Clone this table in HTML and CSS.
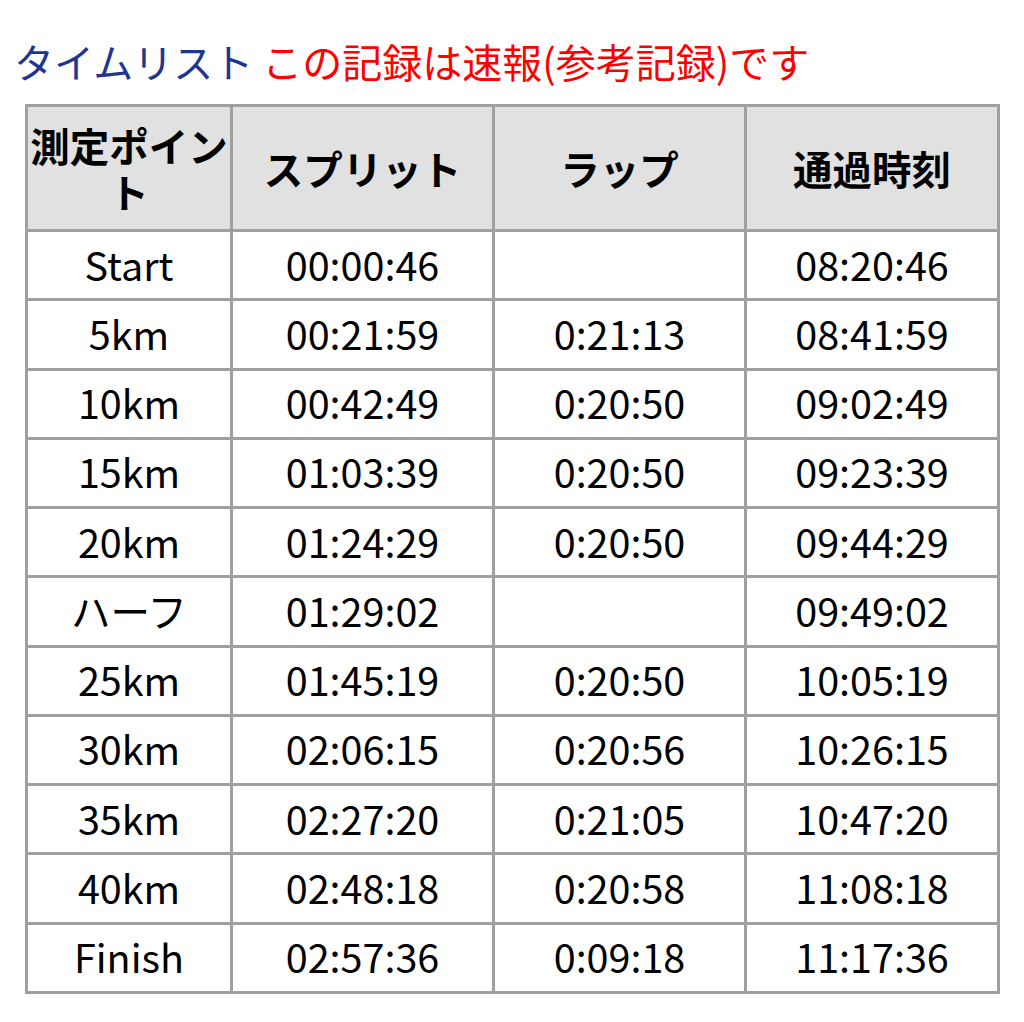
FILE: index.html
```html
<!DOCTYPE html>
<html lang="ja">
<head>
<meta charset="utf-8">
<link rel="stylesheet" href="styles.css">
</head>
<body>
<div class="title"><span class="blue">タイムリスト</span> <span class="red">この記録は速報(参考記録)です</span></div>
<table class="times">
<colgroup><col class="c1"><col class="c2"><col class="c3"><col class="c4"></colgroup>
<thead>
<tr><th>測定ポイント</th><th>スプリット</th><th>ラップ</th><th>通過時刻</th></tr>
</thead>
<tbody>
<tr><td>Start</td><td>00:00:46</td><td></td><td>08:20:46</td></tr>
<tr><td>5km</td><td>00:21:59</td><td>0:21:13</td><td>08:41:59</td></tr>
<tr><td>10km</td><td>00:42:49</td><td>0:20:50</td><td>09:02:49</td></tr>
<tr><td>15km</td><td>01:03:39</td><td>0:20:50</td><td>09:23:39</td></tr>
<tr><td>20km</td><td>01:24:29</td><td>0:20:50</td><td>09:44:29</td></tr>
<tr><td>ハーフ</td><td>01:29:02</td><td></td><td>09:49:02</td></tr>
<tr><td>25km</td><td>01:45:19</td><td>0:20:50</td><td>10:05:19</td></tr>
<tr><td>30km</td><td>02:06:15</td><td>0:20:56</td><td>10:26:15</td></tr>
<tr><td>35km</td><td>02:27:20</td><td>0:21:05</td><td>10:47:20</td></tr>
<tr><td>40km</td><td>02:48:18</td><td>0:20:58</td><td>11:08:18</td></tr>
<tr><td>Finish</td><td>02:57:36</td><td>0:09:18</td><td>11:17:36</td></tr>
</tbody>
</table>
</body>
</html>
```
FILE: styles.css
```css
html, body { margin: 0; padding: 0; background: #fff; }
body {
  font-family: "Noto Sans CJK JP", sans-serif;
  color: #000;
  padding: 0 0 0 17px;
}
.title {
  font-size: 40px;
  line-height: 50px;
  padding-top: 36px;
  height: 50px;
  margin-bottom: 18px;
  margin-left: -3px;
  white-space: nowrap;
}
.blue { color: #1e3591; }
.red { color: #ff0000; }
.times {
  border-collapse: collapse;
  table-layout: fixed;
  width: 975px;
  margin-left: 8px;
  font-size: 39.5px;
}
.c1 { width: 205px; }
.c2 { width: 262px; }
.c3 { width: 252px; }
.c4 { width: 253px; }
.times th, .times td {
  border: 3px solid #a0a0a0;
  text-align: center;
  padding: 0;
}
.times th {
  background: #e1e1e1;
  font-weight: bold;
  height: 122px;
  line-height: 46px;
}
.times td {
  height: 63.27px;
  padding-bottom: 3px;
  line-height: 50px;
}
```
